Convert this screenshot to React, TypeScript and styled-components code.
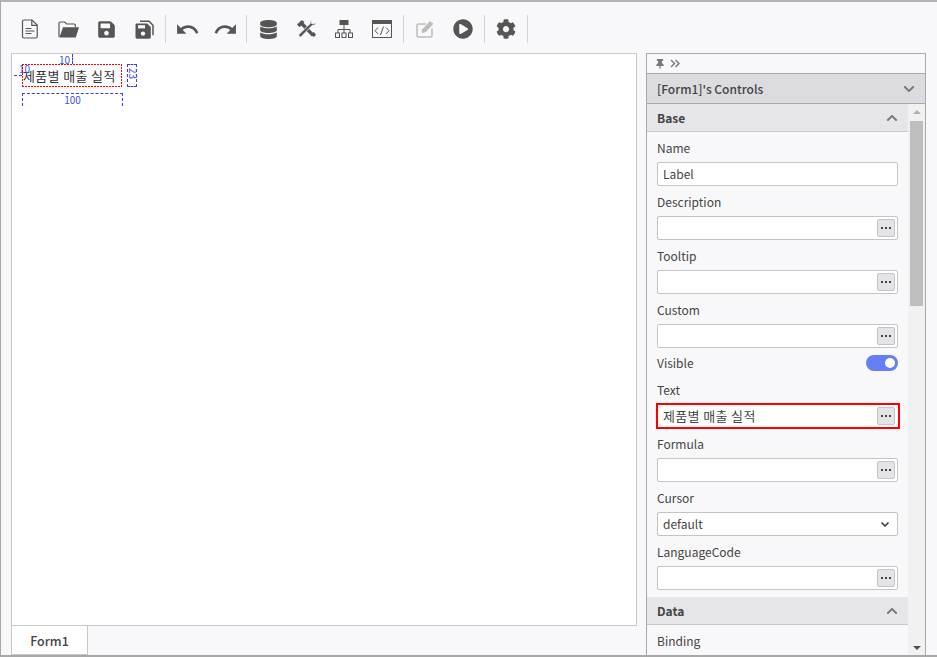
import React from "react";
import styled, { createGlobalStyle } from "styled-components";
import { FaDatabase, FaPlayCircle, FaCog, FaSave, FaThumbtack, FaChevronDown, FaChevronUp } from "react-icons/fa";
import { MdUndo, MdRedo } from "react-icons/md";

const Global = createGlobalStyle`
  html, body { margin: 0; padding: 0; height: 100%; background: #f8f8fa; }
  #root { height: 100%; }
  * { box-sizing: border-box; }
  body { font-family: "Noto Sans CJK KR", "Noto Sans", sans-serif; font-size: 12px; color: #444; }
`;

const Page = styled.div`
  width: 937px; height: 657px; display: flex; flex-direction: column; overflow: hidden;
  border-top: 2px solid #b4b4b4; border-left: 1px solid #a8a8a8; border-bottom: 2px solid #a8a8a8;
  background: #f8f8fa;
`;
const Toolbar = styled.div`
  height: 28px; margin-top: 13px; margin-bottom: 10px; padding-left: 10px; display: flex; align-items: stretch; flex: none;
`;
const ToolBtn = styled.div<{ $dim?: boolean }>`
  width: 38px; display: flex; align-items: center; justify-content: center;
  color: ${p => (p.$dim ? "#bdbdbd" : "#555")};
  svg { display: block; }
`;
const Sep = styled.div`
  width: 1px; margin: 0 2px; background: #d4d4d4;
`;
const Body = styled.div`
  flex: 1; min-height: 0; display: flex; padding-left: 10px;
`;
const Designer = styled.div`
  width: 626px; display: flex; flex-direction: column;
`;
const Canvas = styled.div`
  position: relative; flex: none; height: 573px; background: #fff;
  border: 1px solid #c8c8c8;
`;
const TabBar = styled.div` display: flex; `;
const Tab = styled.div`
  width: 77px; height: 29px; background: #fff; color: #444; font-weight: 500;
  border: 1px solid #c8c8c8; border-top: none; display: flex; align-items: center; justify-content: center;
  font-size: 12.5px;
`;
const SelBox = styled.div`
  position: absolute; left: 10px; top: 10px; width: 100px; height: 23px; padding-left: 1px;
  display: flex; align-items: center; font-size: 13px; color: #333;
  letter-spacing: 0.35px; white-space: nowrap;
  background:
    repeating-linear-gradient(90deg, #f00 0 2px, transparent 2px 3px) top / 100% 1px no-repeat,
    repeating-linear-gradient(90deg, #f00 0 2px, transparent 2px 3px) bottom / 100% 1px no-repeat,
    repeating-linear-gradient(0deg, #f00 0 2px, transparent 2px 3px) left / 1px 100% no-repeat,
    repeating-linear-gradient(0deg, #f00 0 2px, transparent 2px 3px) right / 1px 100% no-repeat;
`;
const DimH = styled.div<{ $top: number; $left: number; $w: number }>`
  position: absolute; top: ${p => p.$top}px; left: ${p => p.$left}px; width: ${p => p.$w}px; height: 13px;
  border-left: 1px dashed #3a3af0; border-right: 1px dashed #3a3af0; border-top: 1px dashed #3a3af0;
  color: #4450f0; font-size: 10px; line-height: 11px; text-align: center;
`;
const DimMark = styled.div<{ $top: number; $left: number; $w: number; $h: number }>`
  position: absolute; top: ${p => p.$top}px; left: ${p => p.$left}px; width: ${p => p.$w}px; height: ${p => p.$h}px;
  border-left: ${p => (p.$w === 0 ? "1px dashed #3a3af0" : "none")};
  border-top: ${p => (p.$h === 0 ? "1px dashed #3a3af0" : "none")};
`;
const DimText = styled.div<{ $top: number; $left: number; $rot?: boolean }>`
  position: absolute; top: ${p => p.$top}px; left: ${p => p.$left}px;
  color: #4450f0; font-size: 10px; line-height: 9px;
  ${p => (p.$rot ? "writing-mode: vertical-rl; line-height: 12px;" : "")}
`;
const DimV = styled.div`
  position: absolute; left: 115px; top: 10px; width: 10px; height: 23px;
  border: 1px dashed #3a3af0;
`;
const Side = styled.div`
  width: 280px; margin-left: 9px; display: flex; flex-direction: column; flex: none;
  border: 1px solid #a8a8a8; border-bottom: none; background: #f8f8fa; min-height: 0; height: 603px;
`;
const PinBar = styled.div`
  height: 19px; flex: none; display: flex; align-items: center; gap: 5px; padding-left: 8px; color: #777;
`;
const PanelHead = styled.div`
  height: 31px; flex: none; display: flex; align-items: center; justify-content: space-between;
  background: #dcdce0; border-top: 1px solid #a8a8a8; border-bottom: 1px solid #a8a8a8;
  padding: 0 10px; font-size: 12px; font-weight: 500; color: #444;
  svg { color: #777; }
`;
const ScrollArea = styled.div` flex: 1; min-height: 0; display: flex; overflow: hidden; `;
const Content = styled.div` width: 261px; flex: none; overflow: hidden; `;
const SectionHead = styled.div`
  height: 28px; display: flex; align-items: center; justify-content: space-between;
  background: #e6e6ea; border-bottom: 1px solid #c8c8c8;
  padding: 0 10px; font-weight: 700; font-size: 12px; color: #444;
  svg { color: #777; }
`;
const Fields = styled.div` padding: 0 10px 7px; `;
const Label = styled.div`
  height: 30px; display: flex; align-items: center; font-size: 12px; color: #444;
`;
const Input = styled.div`
  height: 24px; background: #fff; border-radius: 2px;
  border: 1px solid #c4c4c4;
  display: flex; align-items: center; justify-content: space-between;
  padding: 0 2px 0 5px; font-size: 12px; color: #444;
`;
const HighlightInput = styled(Input)`
  height: 26px; margin: -1px -2px -1px -1px; border: 2px solid #f00; border-radius: 0;
  padding: 0 3px 0 5px; font-size: 13px; letter-spacing: 0.35px;
`;
const Value = styled.span` margin-bottom: 2px; `;
const More = styled.div`
  width: 18px; height: 18px; margin-left: auto; background: #e4e4e8; border: 1px solid #c4c4c4; border-radius: 2px;
  display: flex; align-items: center; justify-content: center; gap: 1.6px;
  i { width: 2px; height: 2px; background: #444; display: block; }
`;
const ToggleRow = styled.div`
  height: 26px; padding-top: 4px; display: flex; align-items: center; justify-content: space-between;
`;
const Toggle = styled.div`
  width: 32px; height: 16px; border-radius: 8px; background: #6580f4; position: relative;
  &::after { content: ""; position: absolute; right: 3px; top: 3px; width: 10px; height: 10px; border-radius: 50%; background: #fff; }
`;
const SelectArrow = styled.svg` margin-right: 5px; `;
const Scrollbar = styled.div`
  width: 17px; flex: none; background: #f1f1f1; display: flex; flex-direction: column; align-items: center;
`;
const ScrollArrow = styled.div<{ $down?: boolean }>`
  width: 0; height: 0; border-left: 4px solid transparent; border-right: 4px solid transparent; flex: none;
  ${p => p.$down ? "border-top: 4px solid #505050; margin-top: auto; margin-bottom: 6px;" : "border-bottom: 4px solid #b0b0b0; margin-top: 6px;"}
`;
const Thumb = styled.div`
  width: 13px; height: 185px; margin-top: 7px; background: #bebebe; flex: none;
`;

const Dots = () => <More><i /><i /><i /></More>;

const FileIcon = () => (
  <svg width="18" height="20" viewBox="0 0 18 20" fill="none" stroke="#555" strokeWidth="1.2">
    <path d="M3 1h8l5.2 5v11.5a1.5 1.5 0 0 1-1.5 1.5H3a1.5 1.5 0 0 1-1.5-1.5v-15A1.5 1.5 0 0 1 3 1z" />
    <path d="M10.8 1v5.4h5.4" />
    <path d="M4.5 9.5h6M4.5 12h9M4.5 14.5h6" />
  </svg>
);
const FolderIcon = () => (
  <svg width="21" height="17" viewBox="0 0 21 17">
    <path d="M1 16V2.2C1 1.4 1.5 1 2.1 1h4.6l2 2h7.6c.7 0 1 .5 1 1v2" fill="none" stroke="#555" strokeWidth="1.2" />
    <path d="M5 6.2h16l-3.2 10.3H1.4z" fill="#555" />
  </svg>
);
const SaveAsIcon = () => (
  <svg width="19" height="19" viewBox="0 0 19 19">
    <path d="M5 1.2h9l4 4v10" fill="none" stroke="#555" strokeWidth="1.5" />
    <path d="M1.8 3.5h10.4l3.6 3.6v10.2c0 .7-.6 1.4-1.4 1.4H1.8c-.7 0-1.3-.7-1.3-1.4V4.9c0-.8.6-1.4 1.3-1.4z" fill="#555" />
    <rect x="3" y="5.2" width="7" height="3.2" fill="#f8f8fa" />
    <circle cx="8" cy="13.6" r="2.2" fill="#f8f8fa" />
  </svg>
);
const ToolsIcon = () => (
  <svg width="21" height="20" viewBox="0 0 21 20" fill="#555">
    <path d="M1 5.5L5.5 1.2l3 1.2-1 1.4 10.8 11.4-2.4 2.4L5.2 6.6 3.6 8.2z" />
    <path d="M15.8 1.6c-.9.1-1.6.9-1.6 1.8l.1 1L2.4 16l2.2 2.2L16 6.6h1.1c1.6 0 2.9-1.6 2.5-3.4l-2 1.8-1.9-.4-.4-1.6z" stroke="#f8f8fa" strokeWidth=".8" />
    <path d="M15 15.5l2.7-2.6 2.3 2.8-2 2.3z" />
  </svg>
);
const SitemapIcon = () => (
  <svg width="18" height="18" viewBox="0 0 18 18" fill="none" stroke="#555">
    <rect x="4.5" y="0" width="9" height="5" fill="#555" stroke="none" />
    <path d="M9 5v8M3 13V9.5h12V13" />
    <rect x=".5" y="13" width="4" height="4.5" />
    <rect x="7" y="13" width="4" height="4.5" />
    <rect x="13.5" y="13" width="4" height="4.5" />
  </svg>
);
const CodeIcon = () => (
  <svg width="20" height="18" viewBox="0 0 20 18" fill="none" stroke="#555">
    <rect x=".5" y=".5" width="19" height="17" />
    <rect x="0" y="0" width="20" height="4" fill="#555" stroke="none" />
    <path d="M6 7.5l-3 3.2 3 3.2M14 7.5l3 3.2-3 3.2M11.5 6.5l-3 8.5" strokeWidth="1" />
  </svg>
);
const EditIcon = () => (
  <svg width="19" height="18" viewBox="0 0 19 18" fill="none">
    <path d="M16 8.5V15.5a1.5 1.5 0 0 1-1.5 1.5H2.5A1.5 1.5 0 0 1 1 15.5V5.5A1.5 1.5 0 0 1 2.5 4H10" stroke="#bdbdbd" strokeWidth="1.5" />
    <path d="M6 9.5L14 1l3.5 2.8-8 8.5-3.8.6z" fill="#bdbdbd" />
  </svg>
);
const DoubleChevron = () => (
  <svg width="10" height="9" viewBox="0 0 10 9" fill="none" stroke="#777" strokeWidth="1.4">
    <path d="M1 1l3.5 3.5L1 8M5.5 1L9 4.5 5.5 8" />
  </svg>
);

const baseFields = ["Description", "Tooltip", "Custom"];

export default function App() {
  return (
    <Page>
      <Global />
      <Toolbar>
        <ToolBtn><FileIcon /></ToolBtn>
        <ToolBtn><FolderIcon /></ToolBtn>
        <ToolBtn><FaSave size={19} /></ToolBtn>
        <ToolBtn><SaveAsIcon /></ToolBtn>
        <Sep />
        <ToolBtn><MdUndo size={25} /></ToolBtn>
        <ToolBtn><MdRedo size={25} /></ToolBtn>
        <Sep />
        <ToolBtn><FaDatabase size={19} /></ToolBtn>
        <ToolBtn><ToolsIcon /></ToolBtn>
        <ToolBtn><SitemapIcon /></ToolBtn>
        <ToolBtn><CodeIcon /></ToolBtn>
        <Sep />
        <ToolBtn $dim><EditIcon /></ToolBtn>
        <ToolBtn><FaPlayCircle size={20} /></ToolBtn>
        <Sep />
        <ToolBtn><FaCog size={20} /></ToolBtn>
        <Sep />
      </Toolbar>
      <Body>
        <Designer>
          <Canvas>
            <SelBox>제품별 매출 실적</SelBox>
            <DimMark $top={0} $left={60} $w={0} $h={10} />
            <DimText $top={1} $left={47}>10</DimText>
            <DimMark $top={21} $left={2} $w={8} $h={0} />
            <DimText $top={10} $left={7}>10</DimText>
            <DimH $top={39} $left={10} $w={101}>
              <span>100</span>
            </DimH>
            <DimV />
            <DimText $top={14} $left={115} $rot>23</DimText>
          </Canvas>
          <TabBar><Tab>Form1</Tab></TabBar>
        </Designer>
        <Side>
          <PinBar>
            <FaThumbtack size={10} />
            <DoubleChevron />
          </PinBar>
          <PanelHead>[Form1]'s Controls <FaChevronDown size={12} /></PanelHead>
          <ScrollArea>
            <Content>
              <SectionHead>Base <FaChevronUp size={12} /></SectionHead>
              <Fields>
                <Label>Name</Label>
                <Input><Value>Label</Value></Input>
                {baseFields.map(f => (
                  <div key={f}>
                    <Label>{f}</Label>
                    <Input><Dots /></Input>
                  </div>
                ))}
                <ToggleRow><Value>Visible</Value><Toggle /></ToggleRow>
                <Label>Text</Label>
                <HighlightInput><Value>제품별 매출 실적</Value><Dots /></HighlightInput>
                <Label>Formula</Label>
                <Input><Dots /></Input>
                <Label>Cursor</Label>
                <Input>
                  <Value>default</Value>
                  <SelectArrow width="10" height="10" viewBox="0 0 10 10" fill="none" stroke="#333" strokeWidth="1.5"><path d="M1.5 3.5L5 7l3.5-3.5" /></SelectArrow>
                </Input>
                <Label>LanguageCode</Label>
                <Input><Dots /></Input>
              </Fields>
              <SectionHead>Data <FaChevronUp size={12} /></SectionHead>
              <Fields>
                <Label>Binding</Label>
                <Input />
              </Fields>
            </Content>
            <Scrollbar>
              <ScrollArrow />
              <Thumb />
              <ScrollArrow $down />
            </Scrollbar>
          </ScrollArea>
        </Side>
      </Body>
    </Page>
  );
}
